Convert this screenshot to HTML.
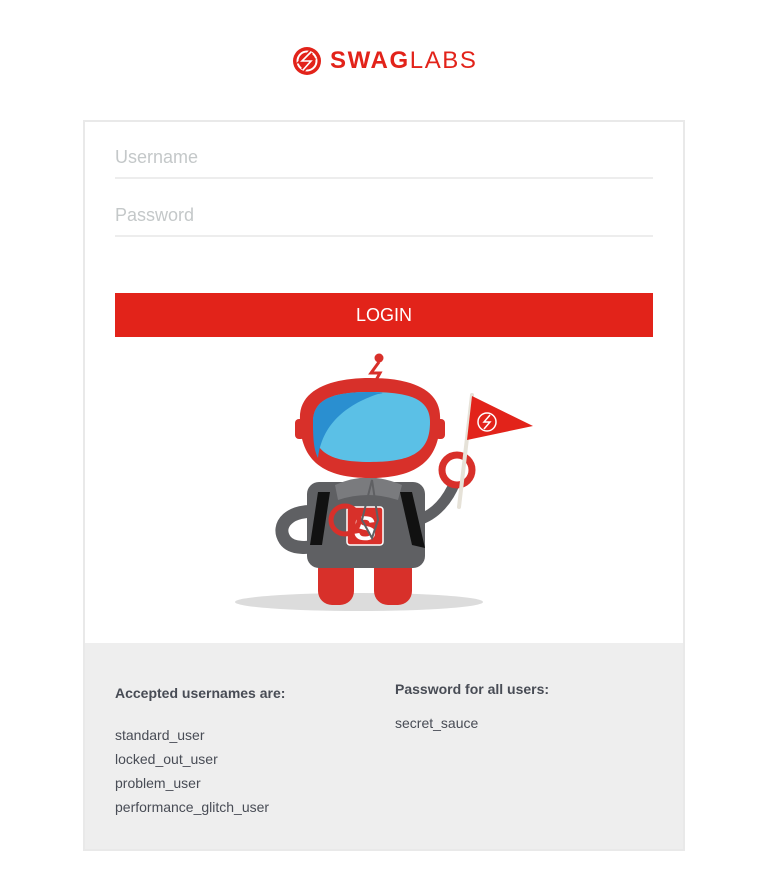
<!DOCTYPE html>
<html><head><meta charset="utf-8"><style>
*{margin:0;padding:0;box-sizing:border-box}
body{width:768px;height:881px;background:#fff;font-family:"Liberation Sans",Arial,sans-serif;position:relative;overflow:hidden}
.a{position:absolute;white-space:nowrap}
.card{position:absolute;left:83px;top:120px;width:602px;height:731px;border:2px solid #e9e9e9;background:#fff}
.bot{position:absolute;left:85px;top:643px;width:598px;height:206px;background:#eee}
.line{position:absolute;left:115px;width:538px;height:2px;background:#ededed}
.ph{color:#c4c8c9;font-size:18px}
.t{color:#484c55;font-size:14px}
.b{font-weight:bold}
</style></head><body>
<svg class="a" style="left:292px;top:46px" width="30" height="30" viewBox="0 0 30 30">
<circle cx="15" cy="15" r="14" fill="#e2231a"/>
<circle cx="15" cy="15" r="9.5" fill="none" stroke="#fff" stroke-width="2"/>
<path d="M19 6 L10 15 L19 15 L11 24" fill="none" stroke="#e2231a" stroke-width="5"/>
<path d="M19 6 L10 15 L19 15 L11 24" fill="none" stroke="#fff" stroke-width="1.6"/>
</svg>
<div class="a" style="left:330px;top:47px;font-size:24px;color:#e2231a;letter-spacing:1.6px;line-height:28px"><b>SWAG</b>LABS</div>
<div class="card"></div>
<div class="bot"></div>
<div class="a ph" style="left:115px;top:147px">Username</div>
<div class="line" style="top:177px"></div>
<div class="a ph" style="left:115px;top:205px">Password</div>
<div class="line" style="top:235px"></div>
<div class="a" style="left:115px;top:293px;width:538px;height:44px;background:#e2231a;color:#fff;font-size:18px;text-align:center;line-height:44px">LOGIN</div>
<svg class="a" style="left:0;top:0" width="768" height="881" viewBox="0 0 768 881">
<ellipse cx="359" cy="602" rx="124" ry="9" fill="#dcdcdc"/>
<rect x="318" y="555" width="36" height="50" rx="14" fill="#d8302a"/>
<rect x="374" y="555" width="38" height="50" rx="14" fill="#d8302a"/>
<path d="M320 512 C290 508 275 525 285 540 C292 550 310 548 320 545" fill="none" stroke="#5f6063" stroke-width="13"/>
<path d="M418 520 C435 515 448 500 455 482" fill="none" stroke="#5f6063" stroke-width="11"/>
<rect x="307" y="482" width="118" height="86" rx="12" fill="#5f6063"/>
<path d="M335 485 Q368 470 402 485 L398 500 Q368 490 338 500Z" fill="#7a7b7e"/>
<path d="M318 492 L310 545 L322 545 L330 492Z" fill="#111"/>
<path d="M400 492 L412 545 L425 548 L412 492Z" fill="#111"/>
<rect x="347" y="507" width="36" height="38" rx="3" fill="#d8302a" stroke="#fff" stroke-width="1.5"/>
<text x="365" y="540" font-size="34" font-weight="bold" fill="#fff" text-anchor="middle" font-family="Liberation Sans">S</text>
<circle cx="345" cy="520" r="14" fill="none" stroke="#d8302a" stroke-width="5"/>
<path d="M372 480 L362 520 L372 538 L378 520Z" fill="none" stroke="#5f6063" stroke-width="2"/>
<circle cx="457" cy="470" r="15" fill="none" stroke="#d8302a" stroke-width="7"/>
<line x1="459" y1="507" x2="472" y2="395" stroke="#e6e2d8" stroke-width="4" stroke-linecap="round"/>
<path d="M472 396 L533 426 L467 440Z" fill="#e2231a"/>
<circle cx="487" cy="422" r="9" fill="none" stroke="#fff" stroke-width="1.5"/>
<path d="M490 415 L484 422 L490 422 L484 429" fill="none" stroke="#fff" stroke-width="1.5"/>
<rect x="295" y="419" width="10" height="20" rx="4" fill="#d8302a"/>
<rect x="435" y="419" width="10" height="20" rx="4" fill="#d8302a"/>
<circle cx="379" cy="358" r="4.5" fill="#d8302a"/>
<path d="M379 362 L371 373 L380 373 L375 382" fill="none" stroke="#d8302a" stroke-width="3"/>
<path d="M300 420 C298 390 330 378 370 378 C412 378 442 390 440 420 C440 462 415 478 370 478 C325 478 300 462 300 420Z" fill="#d8302a"/>
<path d="M313 422 C313 398 335 392 370 392 C408 392 430 398 430 422 C430 450 415 462 370 462 C325 462 313 450 313 422Z" fill="#5bc0e6"/>
<path d="M313 422 C313 398 335 392 370 392 C380 392 388 393 378 394 C345 405 322 425 318 458 C314 450 313 440 313 422Z" fill="#2a8fd0"/>
</svg>
<div class="a t b" style="left:115px;top:685px">Accepted usernames are:</div>
<div class="a t" style="left:115px;top:727px">standard_user</div>
<div class="a t" style="left:115px;top:751px">locked_out_user</div>
<div class="a t" style="left:115px;top:775px">problem_user</div>
<div class="a t" style="left:115px;top:799px">performance_glitch_user</div>
<div class="a t b" style="left:395px;top:681px">Password for all users:</div>
<div class="a t" style="left:395px;top:715px">secret_sauce</div>
</body></html>
